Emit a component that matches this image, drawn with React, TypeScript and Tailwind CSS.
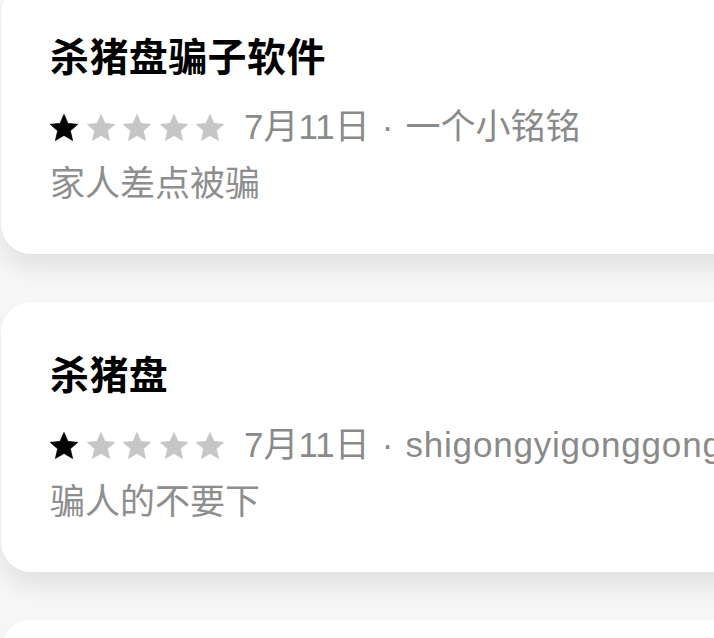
import React from "react";

const Star = ({ filled }: { filled: boolean }) => (
  <svg width="28" height="27" viewBox="1.3 1.5 21.4 20.6" className="shrink-0">
    <path
      d="M12 1.8l3.05 6.9 7.45.7-5.65 4.95 1.7 7.35L12 17.85 5.45 21.7l1.7-7.35L1.5 9.4l7.45-.7z"
      fill={filled ? "#000000" : "#c6c6c6"}
      stroke={filled ? "#000000" : "#c6c6c6"}
      strokeWidth="0.6"
      strokeLinejoin="round"
    />
  </svg>
);

const reviews = [
  { title: "杀猪盘骗子软件", date: "7月11日", author: "一个小铭铭", latin: false, body: "家人差点被骗" },
  { title: "杀猪盘", date: "7月11日", author: "shigongyigonggong", latin: true, body: "骗人的不要下" },
  { title: "", date: "", author: "", latin: false, body: "" },
];

export default function App() {
  return (
    <div
      className="w-[714px] h-[638px] overflow-hidden bg-[#f7f7f7]"
      style={{ fontFamily: '"Liberation Sans", "Noto Sans CJK SC", sans-serif' }}
    >
      <div className="flex flex-col gap-[48px] -mt-[16px] pl-[1px]">
        {reviews.map((r, i) => (
          <div
            key={i}
            className="w-[800px] h-[270px] shrink-0 rounded-[30px] bg-white shadow-[0_14px_26px_rgba(0,0,0,0.09)] pl-[49px] pt-[51px]"
          >
            {r.title && (
              <>
                <div className="text-[39px] leading-[46px] font-semibold text-black tracking-[0.4px]">
                  {r.title}
                </div>
                <div className="mt-[26px] flex items-center h-[40px]">
                  <div className="flex items-center gap-[8.5px]">
                    <Star filled />
                    <Star filled={false} />
                    <Star filled={false} />
                    <Star filled={false} />
                    <Star filled={false} />
                  </div>
                  <span className="ml-[20px] text-[35px] leading-[40px] text-[#8a8a8a] whitespace-nowrap">
                    {r.date}
                    <span className="mx-[12px]">·</span>
                    <span className={r.latin ? "tracking-[0.8px]" : ""}>{r.author}</span>
                  </span>
                </div>
                <div className="mt-[17px] text-[35px] leading-[40px] text-[#8e8e8e]">{r.body}</div>
              </>
            )}
          </div>
        ))}
      </div>
    </div>
  );
}
